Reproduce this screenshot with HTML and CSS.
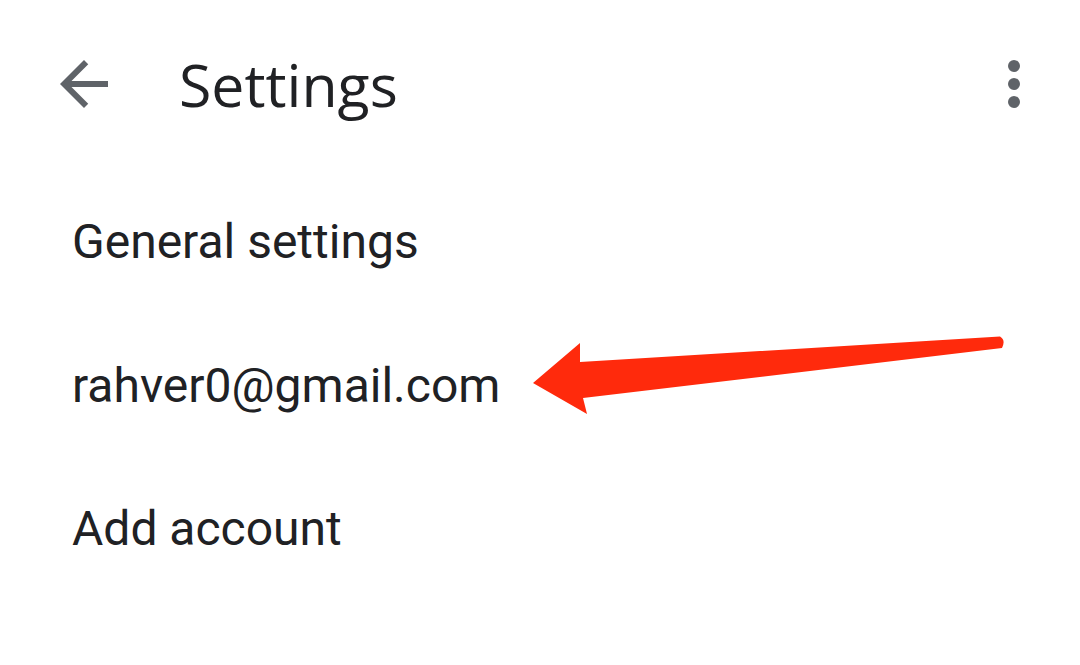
FILE: index.html
```html
<!DOCTYPE html>
<html>
<head>
<meta charset="utf-8">
<link rel="stylesheet" href="styles.css">
</head>
<body>
<div class="screen">
  <header class="appbar">
    <svg class="back" viewBox="4 4 16 16" width="48" height="48"><path d="M20 11H7.83l5.59-5.59L12 4l-8 8 8 8 1.41-1.41L7.83 13H20v-2z" fill="#5f6368"/></svg>
    <h1 class="title">Settings</h1>
    <svg class="more" viewBox="0 0 12 48" width="12" height="48"><circle cx="6" cy="6" r="6" fill="#5f6368"/><circle cx="6" cy="24" r="6" fill="#5f6368"/><circle cx="6" cy="42" r="6" fill="#5f6368"/></svg>
  </header>
  <ul class="list">
    <li class="item">General settings</li>
    <li class="item">rahver0@gmail.com</li>
    <li class="item">Add account</li>
  </ul>
  <svg class="annot" viewBox="0 0 1080 665" width="1080" height="665">
    <path d="M533 383 L580 343 L580 362 L1000 336.5 Q1006 340 1002 348 L583 398 L587 414 Z" fill="#ff2a0c"/>
  </svg>
</div>
</body>
</html>
```
FILE: styles.css
```css
html, body {
  margin: 0;
  padding: 0;
  background: #ffffff;
}
.screen {
  position: relative;
  width: 1080px;
  height: 665px;
  overflow: hidden;
  background: #ffffff;
}
.appbar {
  display: flex;
  align-items: center;
  height: 168px;
  padding: 0 60px;
  box-sizing: border-box;
}
.back {
  flex: none;
  display: block;
}
.title {
  margin: 0 0 0 71px;
  flex: 1;
  font-family: "Open Sans", sans-serif;
  font-weight: 400;
  font-size: 59px;
  color: #202124;
  letter-spacing: 0;
}
.more {
  flex: none;
  display: block;
}
.list {
  list-style: none;
  margin: 0;
  padding: 2px 0 0;
}
.item {
  display: flex;
  align-items: center;
  height: 143.5px;
  padding-left: 72px;
  font-family: Roboto, sans-serif;
  font-size: 48px;
  color: #202124;
}
.annot {
  position: absolute;
  left: 0;
  top: 0;
  pointer-events: none;
}
```
